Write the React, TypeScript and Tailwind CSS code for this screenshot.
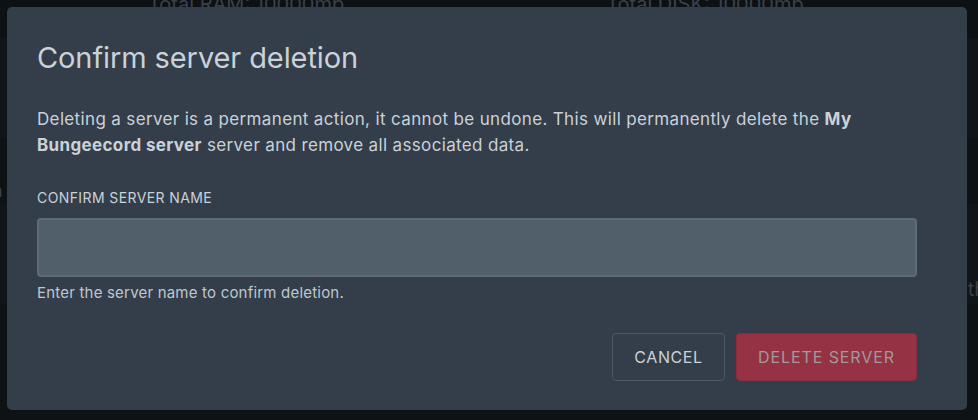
import React from "react";

export default function App() {
  return (
    <div className="relative w-[978px] h-[420px] overflow-hidden bg-[#0f1215]" style={{ fontFamily: "Inter, 'Noto Sans', sans-serif" }}>
      {/* background page (dimmed) */}
      <div className="flex flex-col text-[#3a4149]">
        <div className="h-[38px] bg-[#0e1114]">
          <div className="flex w-full -mt-[8px] text-[20px] leading-[24px]">
            <span className="ml-[148px]">Total RAM: 10000mb</span>
            <span className="ml-[262px]">Total DISK: 10000mb</span>
          </div>
        </div>
        <div className="h-[100px] bg-[#111418] flex justify-end items-start pt-[22px]">
          <span className="text-[20px] -mr-[14px]">g</span>
        </div>
        <div className="h-[66px] bg-[#0f1215] flex items-end">
          <span className="text-[18px] -ml-[8px]">n</span>
        </div>
        <div className="h-[100px] bg-[#111418] flex justify-end items-end">
          <span className="text-[20px] -mr-[8px]">th</span>
        </div>
      </div>

      {/* modal */}
      <div className="absolute left-[7px] top-[7px] w-[960px] h-[403px] rounded-[5px] bg-[#333e4a] pl-[30px] pr-[50px] pt-[29px]">
        <h2 className="text-[29px] leading-[44px] text-[#cad1d8] font-normal tracking-[-0.1px]">Confirm server deletion</h2>
        <p className="mt-[26px] text-[17px] leading-[26px] text-[#cad1d8] tracking-[0.35px]">
          Deleting a server is a permanent action, it cannot be undone. This will permanently delete the <strong className="font-bold">My Bungeecord server</strong> server and remove all associated data.
        </p>
        <label className="block mt-[30px] text-[14px] leading-[20px] text-[#cad1d8] uppercase tracking-[0.4px]">Confirm server name</label>
        <div className="mt-[10px] h-[59px] rounded-[4px] border-2 border-[#5e6a77] bg-[#515f6b]" />
        <p className="mt-[6px] text-[15px] leading-[20px] text-[#bfc7cf] tracking-[0.2px]">Enter the server name to confirm deletion.</p>
        <div className="mt-[30px] flex justify-end gap-[11px]">
          <button className="h-[48px] w-[113px] rounded-[4px] border border-[#4d5966] text-[#cad1d8] text-[16px] uppercase tracking-[0.6px]">Cancel</button>
          <button className="h-[48px] w-[181px] rounded-[4px] border border-[#8f2a3c] bg-[#953243] text-[#a3999f] text-[16px] uppercase tracking-[0.9px]">Delete server</button>
        </div>
      </div>
    </div>
  );
}
